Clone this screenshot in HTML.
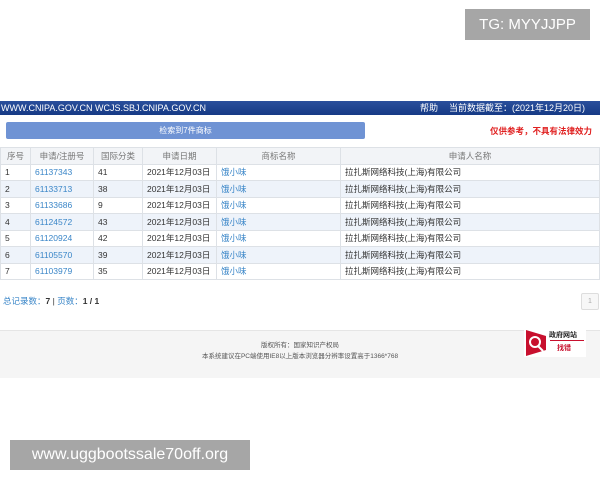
<!DOCTYPE html>
<html><head><meta charset="utf-8"><style>
*{margin:0;padding:0;box-sizing:border-box}
body{width:600px;height:480px;background:#fff;position:relative;overflow:hidden;font-family:"Liberation Sans","Noto Sans CJK SC",sans-serif;font-size:8px;color:#333}
.abs{position:absolute}
.hdr{left:0;top:101px;width:600px;height:14px;background:linear-gradient(#2a4f9c,#163a85);color:#fff;font-size:9px;line-height:14px}
.btn{left:6px;top:122px;width:359px;height:17px;background:#6f93d4;border-radius:2px;color:#fff;text-align:center;line-height:17px;font-size:8px}
table{position:absolute;left:0;top:147px;width:600px;border-collapse:collapse;font-size:8.5px}
td,th{border:1px solid #dde1e6;height:16.5px;padding:0 0 0 4px;text-align:left;font-weight:normal;white-space:nowrap}
th{background:#f2f4f7;color:#777;text-align:center;padding:0}
tr:nth-child(odd) td{background:#eef3fa}
.l{color:#3a86c8}
.foot{left:0;top:330px;width:600px;height:48px;background:#f5f5f5;border-top:1px solid #e5e5e5;text-align:center;font-size:6.5px;color:#555;line-height:11px;padding-top:9px}
.wm{background:#a6a6a6;color:#fff;font-size:15px;line-height:31px}
</style></head><body>
<div class="abs wm" style="left:465px;top:9px;width:125px;height:31px;text-align:center">TG: MYYJJPP</div>
<div class="abs hdr"><span style="position:absolute;left:1px">WWW.CNIPA.GOV.CN WCJS.SBJ.CNIPA.GOV.CN</span><span style="position:absolute;left:420px">帮助</span><span style="position:absolute;left:449px">当前数据截至：(2021年12月20日)</span></div>
<div class="abs btn">检索到7件商标</div>
<div class="abs" style="left:490px;top:125px;color:#e02020;font-weight:bold;font-size:8.5px">仅供参考，不具有法律效力</div>
<table>
<tr><th style="width:30px">序号</th><th style="width:63px">申请/注册号</th><th style="width:49px">国际分类</th><th style="width:74px">申请日期</th><th style="width:124px">商标名称</th><th>申请人名称</th></tr>
<tr><td>1</td><td class="l">61137343</td><td>41</td><td>2021年12月03日</td><td class="l">饿小味</td><td>拉扎斯网络科技(上海)有限公司</td></tr>
<tr><td>2</td><td class="l">61133713</td><td>38</td><td>2021年12月03日</td><td class="l">饿小味</td><td>拉扎斯网络科技(上海)有限公司</td></tr>
<tr><td>3</td><td class="l">61133686</td><td>9</td><td>2021年12月03日</td><td class="l">饿小味</td><td>拉扎斯网络科技(上海)有限公司</td></tr>
<tr><td>4</td><td class="l">61124572</td><td>43</td><td>2021年12月03日</td><td class="l">饿小味</td><td>拉扎斯网络科技(上海)有限公司</td></tr>
<tr><td>5</td><td class="l">61120924</td><td>42</td><td>2021年12月03日</td><td class="l">饿小味</td><td>拉扎斯网络科技(上海)有限公司</td></tr>
<tr><td>6</td><td class="l">61105570</td><td>39</td><td>2021年12月03日</td><td class="l">饿小味</td><td>拉扎斯网络科技(上海)有限公司</td></tr>
<tr><td>7</td><td class="l">61103979</td><td>35</td><td>2021年12月03日</td><td class="l">饿小味</td><td>拉扎斯网络科技(上海)有限公司</td></tr>
</table>
<div class="abs" style="left:3px;top:295px;font-size:8.5px"><span class="l">总记录数：</span><b>7</b> | <span class="l">页数：</span><b>1 / 1</b></div>
<div class="abs" style="left:581px;top:293px;width:18px;height:17px;border:1px solid #ddd;border-radius:2px;background:#f7f7f7;color:#aaa;text-align:center;line-height:15px;font-size:7px">1</div>
<div class="abs foot">版权所有：国家知识产权局<br>本系统建议在PC端使用IE8以上版本浏览器分辨率设置高于1366*768</div>
<div class="abs" style="left:524px;top:327px;width:62px;height:30px;background:#fff">
<svg width="20" height="26" style="position:absolute;left:2px;top:3px"><polygon points="0,0 20,6 20,20 0,26" fill="#c8102e"/><circle cx="9" cy="12" r="5" fill="none" stroke="#fff" stroke-width="2"/><line x1="12" y1="16" x2="17" y2="21" stroke="#fff" stroke-width="2"/></svg>
<div style="position:absolute;left:25px;top:3px;font-size:7px;font-weight:bold;color:#222">政府网站</div>
<div style="position:absolute;left:26px;top:13px;width:34px;border-top:1px solid #c8102e"></div>
<div style="position:absolute;left:33px;top:16px;font-size:7px;font-weight:bold;color:#c8102e">找错</div>
</div>
<div class="abs wm" style="left:10px;top:440px;width:240px;height:30px;text-align:center;font-size:16px;line-height:30px">www.uggbootssale70off.org</div>
</body></html>
